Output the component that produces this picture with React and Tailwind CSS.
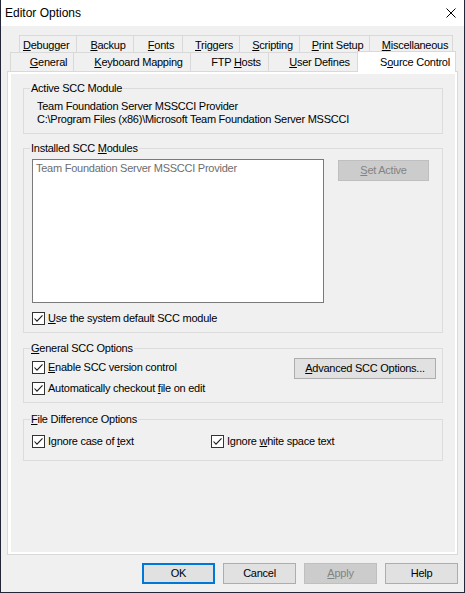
import React from "react";

const U = ({ children }) => (
  <span className="underline underline-offset-1 decoration-1">{children}</span>
);

const Check = () => (
  <span className="w-[13px] h-[13px] border border-[#333333] bg-white flex items-center justify-center shrink-0">
    <svg width="11" height="11" viewBox="0 0 11 11">
      <path d="M1.5 5.5 L4 8.2 L9.5 2.3" fill="none" stroke="#1a1a1a" strokeWidth="1.1" />
    </svg>
  </span>
);

const CheckRow = ({ children, className = "" }) => (
  <div className={"flex items-center gap-[3px] " + className}>
    <Check />
    <span className="leading-[15px] whitespace-nowrap">{children}</span>
  </div>
);

function Group({ label, className, children }) {
  return (
    <div className={"relative border border-[#dcdcdc] " + className}>
      <span className="absolute left-[6px] top-[-8px] px-[1px] bg-[#f0f0f0] leading-[15px] whitespace-nowrap">
        {label}
      </span>
      {children}
    </div>
  );
}

const row1 = [
  { w: "w-[57px] justify-start pl-[3px]", label: <><U>D</U>ebugger</> },
  { w: "w-[57px] justify-center pl-[6px]", label: <><U>B</U>ackup</> },
  { w: "w-[49px] justify-center pl-[6px]", label: <><U>F</U>onts</> },
  { w: "w-[57px] justify-center pl-[6px]", label: <><U>T</U>riggers</> },
  { w: "w-[60px] justify-center pl-[6px]", label: <><U>S</U>cripting</> },
  { w: "w-[70px] justify-center pl-[6px]", label: <><U>P</U>rint Setup</> },
  { w: "w-[84px] justify-center pl-[8px] border-r", label: <><U>M</U>iscellaneous</> },
];

const row2 = [
  { w: "w-[63px]", label: <><U>G</U>eneral</> },
  { w: "w-[117px]", label: <><U>K</U>eyboard Mapping</> },
  { w: "w-[78px]", label: <>FTP <U>H</U>osts</> },
  { w: "w-[89px]", label: <><U>U</U>ser Defines</> },
];

export default function App() {
  return (
    <div
      className="w-[465px] h-[593px] bg-[#f0f0f0] border-l border-r border-b border-[#252538] flex flex-col text-[11px] tracking-[-0.25px] text-black overflow-hidden"
      style={{ fontFamily: '"Liberation Sans", Arial, sans-serif' }}
    >
      {/* Title bar */}
      <div className="h-[26px] shrink-0 bg-white flex items-center justify-between pl-[4px] pr-[8px]">
        <span className="text-[12px] tracking-normal">Editor Options</span>
        <svg width="10" height="10" viewBox="0 0 10 10">
          <path d="M0.5 0.5 L9.5 9.5 M9.5 0.5 L0.5 9.5" stroke="#000" strokeWidth="1" fill="none" />
        </svg>
      </div>

      {/* Tab control */}
      <div className="pt-[9px] ml-[6px] w-[451px]">
        <div className="flex h-[17px] pl-[12px]">
          {row1.map((t, i) => (
            <div
              key={i}
              className={"h-[17px] flex items-center pt-[2px] border-l border-t border-[#d9d9d9] bg-[#f0f0f0] whitespace-nowrap " + t.w}
            >
              <span>{t.label}</span>
            </div>
          ))}
        </div>
        <div className="flex h-[19px] pl-[3px] items-start">
          {row2.map((t, i) => (
            <div
              key={i}
              className={"h-[19px] flex items-center justify-center pl-[13px] pt-[1px] border-l border-t border-[#d9d9d9] bg-[#f0f0f0] whitespace-nowrap " + t.w}
            >
              <span>{t.label}</span>
            </div>
          ))}
          <div className="relative z-10 -mt-[1px] h-[21px] w-[99px] flex items-center justify-center pl-[17px] border-l border-t border-r border-[#d9d9d9] bg-white whitespace-nowrap">
            <span>S<U>o</U>urce Control</span>
          </div>
        </div>

        {/* Panel */}
        <div className="h-[484px] border border-[#d9d9d9] bg-white pl-[3px] pr-[2px] pt-[2px] pb-[2px]">
          <div className="h-full bg-[#f0f0f0] px-[12px] flex flex-col">
            <Group label="Active SCC Module" className="mt-[14px] h-[46px]">
              <div className="pt-[11px] pl-[13px] leading-[13px] whitespace-nowrap">
                <div>Team Foundation Server MSSCCI Provider</div>
                <div>C:\Program Files (x86)\Microsoft Team Foundation Server MSSCCI</div>
              </div>
            </Group>

            <Group
              label={<>Installed SCC <U>M</U>odules</>}
              className="mt-[14px] h-[185px]"
            >
              <div className="pl-[8px] pt-[10px]">
                <div className="flex items-start">
                  <div className="w-[292px] h-[144px] border border-[#7a7a7a] bg-white pl-[3px] pt-[1px] leading-[15px] text-[#6d6d6d] whitespace-nowrap">
                    Team Foundation Server MSSCCI Provider
                  </div>
                  <div className="ml-[14px] mt-[1px] w-[91px] h-[21px] border border-[#bfbfbf] bg-[#cccccc] text-[#838383] flex items-center justify-center">
                    <span><U>S</U>et Active</span>
                  </div>
                </div>
                <CheckRow className="mt-[9px] h-[13px]">
                  <U>U</U>se the system default SCC module
                </CheckRow>
              </div>
            </Group>

            <Group
              label={<><U>G</U>eneral SCC Options</>}
              className="mt-[15px] h-[55px]"
            >
              <div className="flex justify-between pl-[8px] pr-[6px]">
                <div className="pt-[8px] flex flex-col">
                  <CheckRow className="h-[21px]">
                    <U>E</U>nable SCC version control
                  </CheckRow>
                  <CheckRow className="h-[21px]">
                    Automatically checkout <U>f</U>ile on edit
                  </CheckRow>
                </div>
                <div className="pt-[9px]">
                  <div className="w-[142px] h-[21px] border border-[#adadad] bg-[#e1e1e1] flex items-center justify-center whitespace-nowrap">
                    <span><U>A</U>dvanced SCC Options...</span>
                  </div>
                </div>
              </div>
            </Group>

            <Group
              label={<><U>F</U>ile Difference Options</>}
              className="mt-[16px] h-[42px]"
            >
              <div className="flex pl-[8px] pt-[11px]">
                <CheckRow className="h-[21px] w-[179px]">
                  Ignore case of <U>t</U>ext
                </CheckRow>
                <CheckRow className="h-[21px]">
                  Ignore <U>w</U>hite space text
                </CheckRow>
              </div>
            </Group>
          </div>
        </div>
      </div>

      {/* Bottom buttons */}
      <div className="mt-[8px] flex justify-end gap-[8px] pr-[6px]">
        <div className="w-[73px] h-[21px] border-2 border-[#0078d7] bg-[#e1e1e1] flex items-center justify-center">
          OK
        </div>
        <div className="w-[73px] h-[21px] border border-[#adadad] bg-[#e1e1e1] flex items-center justify-center">
          Cancel
        </div>
        <div className="w-[73px] h-[21px] border border-[#bfbfbf] bg-[#cccccc] text-[#838383] flex items-center justify-center">
          <span><U>A</U>pply</span>
        </div>
        <div className="w-[73px] h-[21px] border border-[#adadad] bg-[#e1e1e1] flex items-center justify-center">
          Help
        </div>
      </div>
    </div>
  );
}
